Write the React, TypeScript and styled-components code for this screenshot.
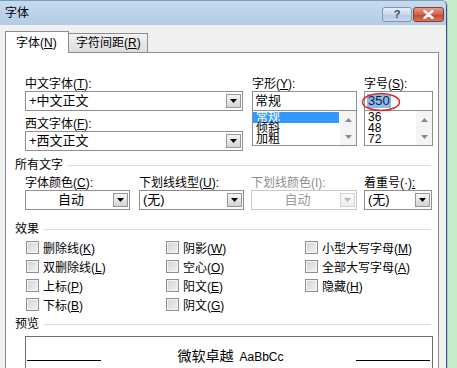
import React from "react";
import styled, { createGlobalStyle } from "styled-components";

const GlobalStyle = createGlobalStyle`
  html, body {
    margin: 0;
    padding: 0;
  }
  body {
    font-family: "Liberation Sans", "Noto Sans CJK SC", sans-serif;
    font-size: 12px;
    color: #000;
    background: #c6ebc9;
  }
`;

const Screen = styled.div`
  display: flex;
  width: 457px;
  height: 368px;
  overflow: hidden;
  background: #c6ebc9;
`;

const Window = styled.div`
  flex: none;
  width: 446px;
  display: flex;
  flex-direction: column;
  background: #f0f0f0;
  border-right: 1px solid #3f5670;
  box-shadow: 1px 0 0 #a9c9e4;
  border-top-right-radius: 6px;
  overflow: hidden;
`;

const TitleBar = styled.div`
  flex: none;
  height: 25px;
  display: flex;
  align-items: flex-start;
  background: linear-gradient(#c7daee, #b3cbe6);
  border-top: 1px solid #7f9cbd;
  box-sizing: border-box;
`;

const Title = styled.div`
  padding: 5px 0 0 5px;
  line-height: 14px;
  font-size: 12px;
`;

const TitleButtons = styled.div`
  margin-left: auto;
  margin-top: 6px;
  margin-right: 2px;
  display: flex;
  gap: 1px;
`;

const CaptionButton = styled.div<{ $close?: boolean }>`
  width: ${(p) => (p.$close ? 31 : 30)}px;
  height: 15px;
  box-sizing: border-box;
  border: 1px solid ${(p) => (p.$close ? "#8a3a2c" : "#7f97b3")};
  border-radius: 3px;
  background: ${(p) =>
    p.$close
      ? "linear-gradient(#e59a88, #d0624b 50%, #c2432a 51%, #d5785f)"
      : "linear-gradient(#e4edf7, #c9d9ec 50%, #b5c9e2 51%, #c7d8ec)"};
  display: flex;
  align-items: center;
  justify-content: center;
  color: ${(p) => (p.$close ? "#fff" : "#3b4a5e")};
  font-weight: bold;
  font-size: 11px;
  line-height: 13px;
`;

const Body = styled.div`
  flex: 1;
  display: flex;
  flex-direction: column;
  padding: 6px 7px 0 5px;
  min-height: 0;
`;

const Tabs = styled.div`
  display: flex;
  align-items: flex-end;
  height: 22px;
  margin-bottom: -1px;
  position: relative;
  z-index: 1;
`;

const Tab = styled.div<{ $active?: boolean }>`
  box-sizing: border-box;
  height: ${(p) => (p.$active ? 22 : 20)}px;
  width: ${(p) => (p.$active ? 64 : 80)}px;
  margin-left: ${(p) => (p.$active ? 0 : -1)}px;
  border: 1px solid #898c95;
  border-bottom: ${(p) => (p.$active ? "none" : "1px solid #898c95")};
  background: ${(p) => (p.$active ? "#fff" : "linear-gradient(#f2f2f2, #dcdcdc)")};
  padding-left: ${(p) => (p.$active ? 10 : 7)}px;
  line-height: ${(p) => (p.$active ? 22 : 18)}px;
  font-size: 12px;
  white-space: nowrap;
`;

const Page = styled.div`
  flex: 1;
  background: #fff;
  border: 1px solid #898c95;
  padding: 24px 7px 0 0;
  display: flex;
  flex-direction: column;
`;

const FontGrid = styled.div`
  display: grid;
  grid-template-columns: 218px 105px 67px;
  column-gap: 9px;
  padding-left: 19px;
  & > :nth-child(3) {
    margin-left: -2px;
  }
`;

const Column = styled.div`
  display: flex;
  flex-direction: column;
  position: relative;
`;

const Label = styled.div<{ $disabled?: boolean; $gap?: number }>`
  height: 14px;
  line-height: 14px;
  font-size: 12px;
  white-space: nowrap;
  margin-top: ${(p) => p.$gap ?? 0}px;
  color: ${(p) => (p.$disabled ? "#8d8d8d" : "#000")};
`;

const Combo = styled.div<{ $disabled?: boolean }>`
  box-sizing: border-box;
  height: 20px;
  border: 1px solid ${(p) => (p.$disabled ? "#c9c9c9" : "#8f8f8f")};
  background: #fff;
  display: flex;
  align-items: center;
  padding: 1px 1px 1px 3px;
  color: ${(p) => (p.$disabled ? "#9a9a9a" : "#000")};
  font-size: 13px;
`;

const ComboText = styled.div<{ $center?: boolean }>`
  flex: 1;
  text-align: ${(p) => (p.$center ? "center" : "left")};
  white-space: nowrap;
  line-height: 16px;
`;

const DropButton = styled.div<{ $disabled?: boolean }>`
  flex: none;
  width: 15px;
  height: 14px;
  box-sizing: border-box;
  border: 1px solid ${(p) => (p.$disabled ? "#d2d2d2" : "#979797")};
  background: ${(p) =>
    p.$disabled ? "linear-gradient(#fafafa, #ececec)" : "linear-gradient(#f6f6f6, #d4d4d4)"};
  display: flex;
  align-items: center;
  justify-content: center;
`;

const TextBox = styled.div`
  box-sizing: border-box;
  height: 20px;
  border: 1px solid #8f8f8f;
  background: #fff;
  padding: 1px 2px;
  font-size: 13px;
  line-height: 16px;
  display: flex;
  align-items: center;
`;

const Selected = styled.span`
  background: #8cbbe8;
  color: #0c1d4e;
  line-height: 14px;
  padding: 0 1px;
`;

const ListBox = styled.div`
  box-sizing: border-box;
  height: 36px;
  margin-top: -1px;
  border: 1px solid #8f8f8f;
  background: #fff;
  display: flex;
  overflow: hidden;
`;

const ListItems = styled.div`
  flex: 1;
  display: flex;
  flex-direction: column;
  padding-top: 1px;
`;

const ListItem = styled.div<{ $selected?: boolean }>`
  height: 11px;
  line-height: 11px;
  font-size: 12px;
  padding-left: 3px;
  background: ${(p) => (p.$selected ? "#3399ff" : "transparent")};
  color: ${(p) => (p.$selected ? "#fff" : "#000")};
  margin-right: 1px;
  white-space: nowrap;
`;

const ScrollBar = styled.div`
  flex: none;
  width: 16px;
  display: flex;
  flex-direction: column;
  background: #f4f4f4;
`;

const ScrollArrow = styled.div`
  flex: 1;
  display: flex;
  align-items: center;
  justify-content: center;
`;

const Section = styled.div<{ $gap: number }>`
  display: flex;
  align-items: center;
  height: 14px;
  padding-left: 9px;
  margin-top: ${(p) => p.$gap}px;
`;

const SectionTitle = styled.div`
  font-size: 12px;
  line-height: 14px;
  white-space: nowrap;
`;

const SectionRule = styled.div`
  flex: 1;
  height: 1px;
  margin-left: 5px;
  background: #dadfe3;
`;

const AllTextGrid = styled.div`
  display: grid;
  grid-template-columns: 105px 106px 105px 67px;
  column-gap: 8px;
  padding-left: 19px;
  margin-top: 4px;
  & > :nth-child(2) {
    margin-left: 1px;
  }
  & > :nth-child(3) {
    margin-left: -1px;
  }
  & > :nth-child(4) {
    margin-left: -1px;
  }
`;

const EffectGrid = styled.div`
  display: grid;
  grid-template-columns: 140px 139px 1fr;
  grid-auto-rows: 19px;
  padding-left: 20px;
  margin-top: 2px;
`;

const CheckRow = styled.div`
  display: flex;
  align-items: center;
  gap: 4px;
  font-size: 12px;
  white-space: nowrap;
`;

const CheckBox = styled.div`
  width: 13px;
  height: 13px;
  box-sizing: border-box;
  border: 1px solid #8e8f8f;
  background: linear-gradient(135deg, #d2d2d2, #f2f2f2);
  box-shadow: inset 0 0 0 1px #f3f3f3;
`;

const Preview = styled.div`
  margin: 5px 0 0 19px;
  width: 408px;
  height: 40px;
  box-sizing: border-box;
  border: 1px solid #6e6e6e;
  border-bottom: none;
  padding: 0 2px 0 1px;
  display: flex;
  align-items: flex-start;
  justify-content: space-between;
`;

const PreviewLine = styled.div`
  width: 74px;
  height: 1px;
  background: #000;
  margin-top: 23px;
`;

const PreviewText = styled.div`
  margin-top: 10px;
  display: flex;
  align-items: baseline;
  gap: 6px;
  margin-left: 4px;
`;

const PreviewCjk = styled.span`
  font-family: "Noto Sans CJK SC", sans-serif;
  font-size: 14px;
  line-height: 16px;
`;

const PreviewLatin = styled.span`
  font-family: "Liberation Sans", sans-serif;
  font-size: 12px;
`;

const Annotation = styled.svg`
  position: absolute;
  left: -3px;
  top: 15px;
  pointer-events: none;
`;

const Arrow = ({ up, color = "#000" }: { up?: boolean; color?: string }) => (
  <svg width="7" height="4" viewBox="0 0 7 4">
    <path d={up ? "M0 4 L3.5 0 L7 4 Z" : "M0 0 L7 0 L3.5 4 Z"} fill={color} />
  </svg>
);

const Drop = ({ disabled }: { disabled?: boolean }) => (
  <DropButton $disabled={disabled}>
    <Arrow color={disabled ? "#b5b5b5" : "#000"} />
  </DropButton>
);

const Scroll = () => (
  <ScrollBar>
    <ScrollArrow>
      <Arrow up color="#8a8a8a" />
    </ScrollArrow>
    <ScrollArrow>
      <Arrow color="#8a8a8a" />
    </ScrollArrow>
  </ScrollBar>
);

const Mn = ({ k }: { k: string }) => (
  <>
    (<u>{k}</u>)
  </>
);

const effects = [
  ["删除线", "K"],
  ["阴影", "W"],
  ["小型大写字母", "M"],
  ["双删除线", "L"],
  ["空心", "O"],
  ["全部大写字母", "A"],
  ["上标", "P"],
  ["阳文", "E"],
  ["隐藏", "H"],
  ["下标", "B"],
  ["阴文", "G"],
  ["", ""],
];

export default function App() {
  return (
    <Screen>
      <GlobalStyle />
      <Window>
        <TitleBar>
          <Title>字体</Title>
          <TitleButtons>
            <CaptionButton>?</CaptionButton>
            <CaptionButton $close>
              <svg width="11" height="9" viewBox="0 0 11 9">
                <path d="M1.5 1 L9.5 8 M9.5 1 L1.5 8" stroke="#fff" strokeWidth="2.4" strokeLinecap="round" />
              </svg>
            </CaptionButton>
          </TitleButtons>
        </TitleBar>
        <Body>
          <Tabs>
            <Tab $active>
              字体<Mn k="N" />
            </Tab>
            <Tab>
              字符间距<Mn k="R" />
            </Tab>
          </Tabs>
          <Page>
            <FontGrid>
              <Column>
                <Label>
                  中文字体<Mn k="T" />:
                </Label>
                <Combo>
                  <ComboText>+中文正文</ComboText>
                  <Drop />
                </Combo>
                <Label $gap={6}>
                  西文字体<Mn k="F" />:
                </Label>
                <Combo>
                  <ComboText>+西文正文</ComboText>
                  <Drop />
                </Combo>
              </Column>
              <Column>
                <Label>
                  字形<Mn k="Y" />:
                </Label>
                <TextBox>常规</TextBox>
                <ListBox>
                  <ListItems>
                    <ListItem $selected>常规</ListItem>
                    <ListItem>倾斜</ListItem>
                    <ListItem>加粗</ListItem>
                  </ListItems>
                  <Scroll />
                </ListBox>
              </Column>
              <Column>
                <Label>
                  字号<Mn k="S" />:
                </Label>
                <TextBox>
                  <Selected>350</Selected>
                </TextBox>
                <ListBox>
                  <ListItems>
                    <ListItem>36</ListItem>
                    <ListItem>48</ListItem>
                    <ListItem>72</ListItem>
                  </ListItems>
                  <Scroll />
                </ListBox>
                <Annotation width="40" height="20" viewBox="0 0 40 20">
                  <ellipse cx="20" cy="10" rx="18.5" ry="8.5" fill="none" stroke="#e0241f" strokeWidth="1.4" />
                </Annotation>
              </Column>
            </FontGrid>

            <Section $gap={7}>
              <SectionTitle>所有文字</SectionTitle>
              <SectionRule />
            </Section>
            <AllTextGrid>
              <Column>
                <Label>
                  字体颜色<Mn k="C" />:
                </Label>
                <Combo>
                  <ComboText $center>自动</ComboText>
                  <Drop />
                </Combo>
              </Column>
              <Column>
                <Label>
                  下划线线型<Mn k="U" />:
                </Label>
                <Combo>
                  <ComboText>(无)</ComboText>
                  <Drop />
                </Combo>
              </Column>
              <Column>
                <Label $disabled>下划线颜色(I):</Label>
                <Combo $disabled>
                  <ComboText $center>自动</ComboText>
                  <Drop disabled />
                </Combo>
              </Column>
              <Column>
                <Label>
                  着重号(·)<u>:</u>
                </Label>
                <Combo>
                  <ComboText>(无)</ComboText>
                  <Drop />
                </Combo>
              </Column>
            </AllTextGrid>

            <Section $gap={12}>
              <SectionTitle>效果</SectionTitle>
              <SectionRule />
            </Section>
            <EffectGrid>
              {effects.map(([text, key], i) =>
                text ? (
                  <CheckRow key={i}>
                    <CheckBox />
                    <span>
                      {text}
                      <Mn k={key} />
                    </span>
                  </CheckRow>
                ) : (
                  <div key={i} />
                )
              )}
            </EffectGrid>

            <Section $gap={3}>
              <SectionTitle>预览</SectionTitle>
              <SectionRule />
            </Section>
            <Preview>
              <PreviewLine />
              <PreviewText>
                <PreviewCjk>微软卓越</PreviewCjk>
                <PreviewLatin>AaBbCc</PreviewLatin>
              </PreviewText>
              <PreviewLine />
            </Preview>
          </Page>
        </Body>
      </Window>
    </Screen>
  );
}
